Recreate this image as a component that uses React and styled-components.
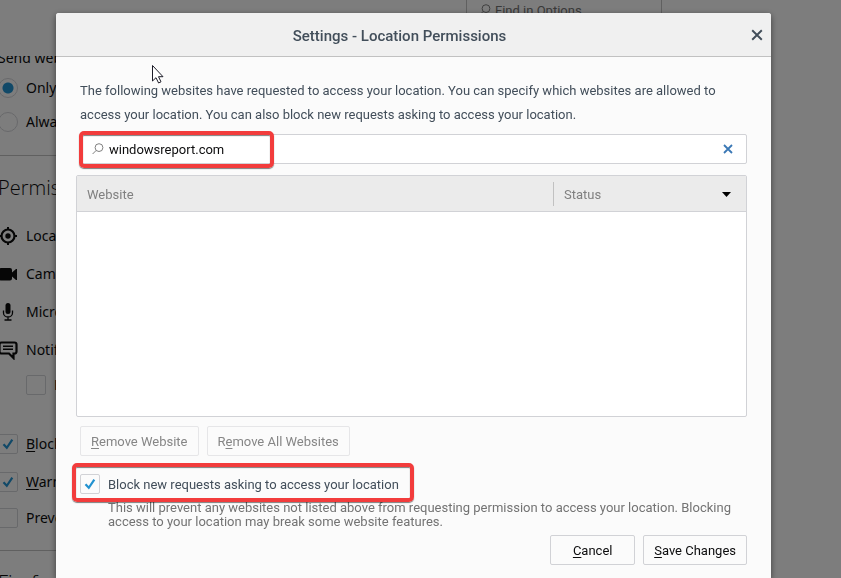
import React, { useState } from 'react'
import styled, { createGlobalStyle } from 'styled-components'

const GlobalStyle = createGlobalStyle`
  * {
    box-sizing: border-box;
  }

  body {
    margin: 0;
    background: #fbfbfb;
    font-family: Roboto, 'Noto Sans', sans-serif;
    font-size: 13px;
    color: #424e5a;
  }

  button,
  input {
    font: inherit;
  }
`

const Page = styled.div`
  height: 100vh;
  display: flex;
  flex-direction: column;
  overflow: hidden;
  padding-right: 179px;
`

const PageHeader = styled.header`
  flex: none;
  display: flex;
  justify-content: flex-end;
  height: 56px;
`

const PageSearch = styled.label`
  display: flex;
  align-items: center;
  gap: 4px;
  width: 196px;
  height: 21px;
  padding-left: 12px;
  border: 1px solid #c1c1c1;
  border-top: 0;
  color: #737373;
`

const PageSearchInput = styled.input`
  flex: 1;
  min-width: 0;
  padding: 0;
  border: 0;
  background: none;

  &::placeholder {
    color: #737373;
    opacity: 1;
  }
`

const Preferences = styled.main`
  flex: 1;
  min-height: 0;
  overflow: hidden;
  margin-left: -2px;
  color: #0c0c0d;
  font-family: 'Noto Sans', 'Open Sans', sans-serif;
  font-size: 14px;
  line-height: 20px;
  white-space: nowrap;
`

const Intro = styled.p`
  margin: -8px 0 0;
`

const Section = styled.section`
  padding-bottom: ${(p) => p.$bottom || 0}px;
  border-bottom: 1px solid #c1c1c1;
`

const SectionTitle = styled.h2`
  margin: 0;
  padding-top: 16px;
  font-family: 'Open Sans', 'Noto Sans', sans-serif;
  font-size: 20px;
  font-weight: 300;
  line-height: 32px;
`

const PrefRow = styled.label`
  display: flex;
  align-items: center;
  gap: 8px;
  height: ${(p) => p.$height || 38}px;
  padding-left: ${(p) => (p.$indent ? 28 : 0)}px;
`

const PermissionList = styled.div`
  padding-top: 13px;
`

const PermissionIcon = styled.svg`
  flex: none;
  width: 20px;
  height: 20px;
`

const Choices = styled.div`
  padding-top: ${(p) => p.$top}px;
`

const Radio = styled.input`
  appearance: none;
  flex: none;
  width: 20px;
  height: 20px;
  margin: 0;
  border: 1px solid #d1d2d6;
  border-radius: 50%;

  &:checked {
    background: radial-gradient(circle, #2292d0 5px, transparent 6px);
  }
`

const CheckFrame = styled.span`
  position: relative;
  flex: none;
  display: flex;
  width: 20px;
  height: 20px;
`

const CheckInput = styled.input`
  appearance: none;
  width: 100%;
  height: 100%;
  margin: 0;
  border: 1px solid #d1d2d6;
  border-radius: 2px;
  background: #fbfbfb;
`

const CheckMark = styled.svg`
  position: absolute;
  inset: 0;
  pointer-events: none;
`

const Overlay = styled.div`
  position: fixed;
  inset: 0;
  display: flex;
  padding: 13px 70px 0 56px;
  background: rgba(0, 0, 0, 0.5);
`

const Dialog = styled.div`
  flex: 1;
  min-width: 0;
  border-radius: 3px 3px 0 0;
  background: #fbfbfb;
  box-shadow: 0 2px 6px rgba(0, 0, 0, 0.5);
`

const TitleBar = styled.header`
  display: flex;
  align-items: center;
  gap: 8px;
  height: 44px;
  padding-right: 8px;
  border-bottom: 1px solid #c1c1c1;
  border-radius: 3px 3px 0 0;
  background: #f0f0f0;
`

const Title = styled.h1`
  flex: 1;
  margin: 0;
  padding-top: 2px;
  font-size: 15px;
  font-weight: 500;
  text-align: center;
`

const IconButton = styled.button`
  display: flex;
  padding: 0;
  border: 0;
  background: none;
  color: ${(p) => p.$color};
`

const DialogBody = styled.div`
  padding: 22px 24px 14px;
`

const Description = styled.p`
  margin: 0 0 7px;
  line-height: 24px;
`

const SearchBox = styled.div`
  position: relative;
  display: flex;
  align-items: center;
  gap: 5px;
  height: 30px;
  padding: 0 13px 0 11px;
  border: 1px solid #d1d2d6;
  border-radius: 2px;
  background: #fff;
`

const SearchInput = styled.input`
  flex: 1;
  min-width: 0;
  padding: 0;
  border: 0;
  outline: 0;
  background: none;
  color: #0c0c0d;
`

const Highlight = styled.span`
  position: absolute;
  top: ${(p) => p.$top}px;
  left: ${(p) => p.$left}px;
  width: ${(p) => p.$width}px;
  height: ${(p) => p.$height}px;
  border: 4px solid #f23c3c;
  border-radius: 5px;
  box-shadow:
    0 1px 1px rgba(0, 0, 0, 0.5),
    inset 0 1px 1px rgba(0, 0, 0, 0.5);
  pointer-events: none;
`

const SiteList = styled.div`
  height: 242px;
  margin: 11px 0 9px -4px;
  border: 1px solid #d1d2d6;
  border-radius: 2px;
  background: #fff;
`

const SiteTable = styled.table`
  width: 100%;
  border-collapse: separate;
  border-spacing: 0;
  table-layout: fixed;
`

const HeadCell = styled.th`
  height: 36px;
  padding: 0;
  border-bottom: 1px solid #d1d2d6;
  background: #ebebeb;
  color: #808080;
  font-weight: 400;
  text-align: left;

  &:last-child {
    width: 193px;
  }
`

const HeadLabel = styled.div`
  display: flex;
  align-items: center;
  justify-content: space-between;
  height: 24px;
  padding: 1px 15px 0 10px;
  border-left: ${(p) => (p.$divided ? '1px solid #c1c1c1' : '0')};
`

const ButtonRow = styled.div`
  display: flex;
  gap: 8px;
  justify-content: ${(p) => (p.$end ? 'flex-end' : 'flex-start')};
`

const Button = styled.button`
  height: 30px;
  min-width: 85px;
  padding: 0 10px;
  border: 1px solid #d1d2d6;
  border-radius: 2px;
  background: #fbfbfb;
  color: #0c0c0d;

  &:disabled {
    border-color: #e6e6e8;
    color: #868686;
  }
`

const AccessKey = styled.span`
  text-decoration: underline;
  text-underline-offset: 2px;
`

const BlockOption = styled.label`
  position: relative;
  display: flex;
  align-items: center;
  gap: 8px;
  width: fit-content;
  margin-top: 18px;
`

const Note = styled.p`
  margin: 7px 0 6px 28px;
  color: #737373;
  line-height: 14px;
`

const Pointer = styled.svg`
  position: fixed;
  top: 64px;
  left: 151px;
  pointer-events: none;
`

const SearchIcon = ({ size = 12 }) => (
  <svg width={size} height={size} viewBox="0 0 12 12" fill="none" stroke="#808080">
    <circle cx="7" cy="4.6" r="3.9" />
    <path d="M4.2 7.4L0.6 11" />
  </svg>
)

const CloseIcon = ({ size, width }) => (
  <svg width={size} height={size} viewBox="0 0 10 10" fill="none">
    <path d="M1 1L9 9M9 1L1 9" stroke="currentColor" strokeWidth={width} />
  </svg>
)

const Checkbox = ({ checked, ...props }) => (
  <CheckFrame>
    <CheckInput type="checkbox" checked={checked} {...props} />
    {checked && (
      <CheckMark viewBox="0 0 20 20" fill="none">
        <path d="M5.5 10.2L8.8 13.8L14.3 5.6" stroke="#2292d0" strokeWidth="2.2" />
      </CheckMark>
    )}
  </CheckFrame>
)

const permissions = [
  {
    name: 'Location',
    icon: (
      <>
        <circle cx="10" cy="10" r="6.5" fill="none" stroke="#0c0c0d" strokeWidth="2.2" />
        <circle cx="10" cy="10" r="2.7" />
        <path d="M9 1h2v3H9zM9 16h2v3H9zM1 9h3v2H1zM16 9h3v2h-3z" />
      </>
    ),
  },
  {
    name: 'Camera',
    icon: (
      <path d="M3 4h9a2 2 0 0 1 2 2v2.5l4-3.5h1v11h-1l-4-3.5v2a2 2 0 0 1-2 2H3a2 2 0 0 1-2-2V6a2 2 0 0 1 2-2z" />
    ),
  },
  {
    name: 'Microphone',
    icon: (
      <>
        <rect x="7.5" y="1" width="5" height="11" rx="2.5" />
        <path
          d="M5.5 8.5v2.5a4.5 4 0 0 0 9 0V8.5M10 15v3M6.5 18h7"
          fill="none"
          stroke="#0c0c0d"
          strokeWidth="1.3"
        />
      </>
    ),
  },
  {
    name: 'Notifications',
    icon: (
      <>
        <path
          d="M3.5 2.5h13a2 2 0 0 1 2 2v7a2 2 0 0 1-2 2H15.5v4.5l-4.5-4.5H3.5a2 2 0 0 1-2-2V4.5a2 2 0 0 1 2-2z"
          fill="none"
          stroke="#0c0c0d"
          strokeWidth="2.2"
        />
        <path d="M5 5.5h10v1.5H5zM5 8.5h10v1.5H5z" />
      </>
    ),
  },
]

const OptionsPage = () => {
  const [track, setTrack] = useState('only')
  const [prefs, setPrefs] = useState({
    pause: false,
    popups: true,
    addons: true,
    services: false,
  })
  const toggle = (key) => () => setPrefs({ ...prefs, [key]: !prefs[key] })

  return (
    <Page>
      <PageHeader>
        <PageSearch>
          <SearchIcon />
          <PageSearchInput placeholder="Find in Options" />
        </PageSearch>
      </PageHeader>
      <Preferences>
        <Section $bottom={16}>
          <Intro>Send websites a “Do Not Track” signal</Intro>
          <Choices $top={3}>
            <PrefRow $height={34}>
              <Radio
                type="radio"
                name="track"
                checked={track === 'only'}
                onChange={() => setTrack('only')}
              />
              Only when using Tracking Protection
            </PrefRow>
            <PrefRow $height={34}>
              <Radio
                type="radio"
                name="track"
                checked={track === 'always'}
                onChange={() => setTrack('always')}
              />
              Always
            </PrefRow>
          </Choices>
        </Section>
        <Section $bottom={15}>
          <SectionTitle>Permissions</SectionTitle>
          <PermissionList>
            {permissions.map(({ name, icon }) => (
              <PrefRow as="div" key={name}>
                <PermissionIcon viewBox="0 0 20 20" fill="#0c0c0d">
                  {icon}
                </PermissionIcon>
                {name}
              </PrefRow>
            ))}
          </PermissionList>
          <PrefRow $indent $height={32}>
            <Checkbox checked={prefs.pause} onChange={toggle('pause')} />
            Pause notifications until Firefox restarts
          </PrefRow>
          <Choices $top={24}>
            <PrefRow>
              <Checkbox checked={prefs.popups} onChange={toggle('popups')} />
              <span>
                <AccessKey>B</AccessKey>lock pop-up windows
              </span>
            </PrefRow>
            <PrefRow>
              <Checkbox checked={prefs.addons} onChange={toggle('addons')} />
              <span>
                <AccessKey>W</AccessKey>arn you when websites try to install add-ons
              </span>
            </PrefRow>
            <PrefRow $height={34}>
              <Checkbox checked={prefs.services} onChange={toggle('services')} />
              Prevent accessibility services from accessing your browser
            </PrefRow>
          </Choices>
        </Section>
        <SectionTitle>Firefox Data Collection and Use</SectionTitle>
      </Preferences>
    </Page>
  )
}

const PermissionsDialog = () => {
  const [site, setSite] = useState('windowsreport.com')
  const [block, setBlock] = useState(true)

  return (
    <Dialog role="dialog" aria-labelledby="dialog-title">
      <TitleBar>
        <Title id="dialog-title">Settings - Location Permissions</Title>
        <IconButton $color="#424e5a" aria-label="Close">
          <CloseIcon size={12} width={1.6} />
        </IconButton>
      </TitleBar>
      <DialogBody>
        <Description>
          The following websites have requested to access your location. You can
          specify which websites are allowed to access your location. You can
          also block new requests asking to access your location.
        </Description>
        <SearchBox>
          <SearchIcon />
          <SearchInput
            aria-label="Search website"
            value={site}
            onChange={(e) => setSite(e.target.value)}
          />
          <IconButton
            $color="#3a78b5"
            aria-label="Clear"
            onClick={() => setSite('')}
          >
            <CloseIcon size={10} width={1.8} />
          </IconButton>
          <Highlight $top={-4} $left={-2} $width={195} $height={37} />
        </SearchBox>
        <SiteList>
          <SiteTable>
            <thead>
              <tr>
                <HeadCell>
                  <HeadLabel>Website</HeadLabel>
                </HeadCell>
                <HeadCell>
                  <HeadLabel $divided>
                    Status
                    <svg width="9" height="5" viewBox="0 0 9 5">
                      <path d="M0 0h9L4.5 5z" />
                    </svg>
                  </HeadLabel>
                </HeadCell>
              </tr>
            </thead>
            <tbody />
          </SiteTable>
        </SiteList>
        <ButtonRow>
          <Button disabled>
            <AccessKey>R</AccessKey>emove Website
          </Button>
          <Button disabled>
            R<AccessKey>e</AccessKey>move All Websites
          </Button>
        </ButtonRow>
        <BlockOption>
          <Checkbox checked={block} onChange={() => setBlock(!block)} />
          Block new requests asking to access your location
          <Highlight $top={-11} $left={-8} $width={342} $height={39} />
        </BlockOption>
        <Note>
          This will prevent any websites not listed above from requesting
          permission to access your location. Blocking access to your location
          may break some website features.
        </Note>
        <ButtonRow $end>
          <Button>
            <AccessKey>C</AccessKey>ancel
          </Button>
          <Button>
            <AccessKey>S</AccessKey>ave Changes
          </Button>
        </ButtonRow>
      </DialogBody>
    </Dialog>
  )
}

const App = () => (
  <>
    <GlobalStyle />
    <OptionsPage />
    <Overlay>
      <PermissionsDialog />
    </Overlay>
    <Pointer width="14" height="21" viewBox="0 0 14 21">
      <path
        d="M1.5 1.5v15.5l3.5-3.3 2.6 5.3 2.4-1.2-2.5-5.1h4.5z"
        fill="#fff"
        stroke="#1c1c28"
      />
    </Pointer>
  </>
)

export default App
